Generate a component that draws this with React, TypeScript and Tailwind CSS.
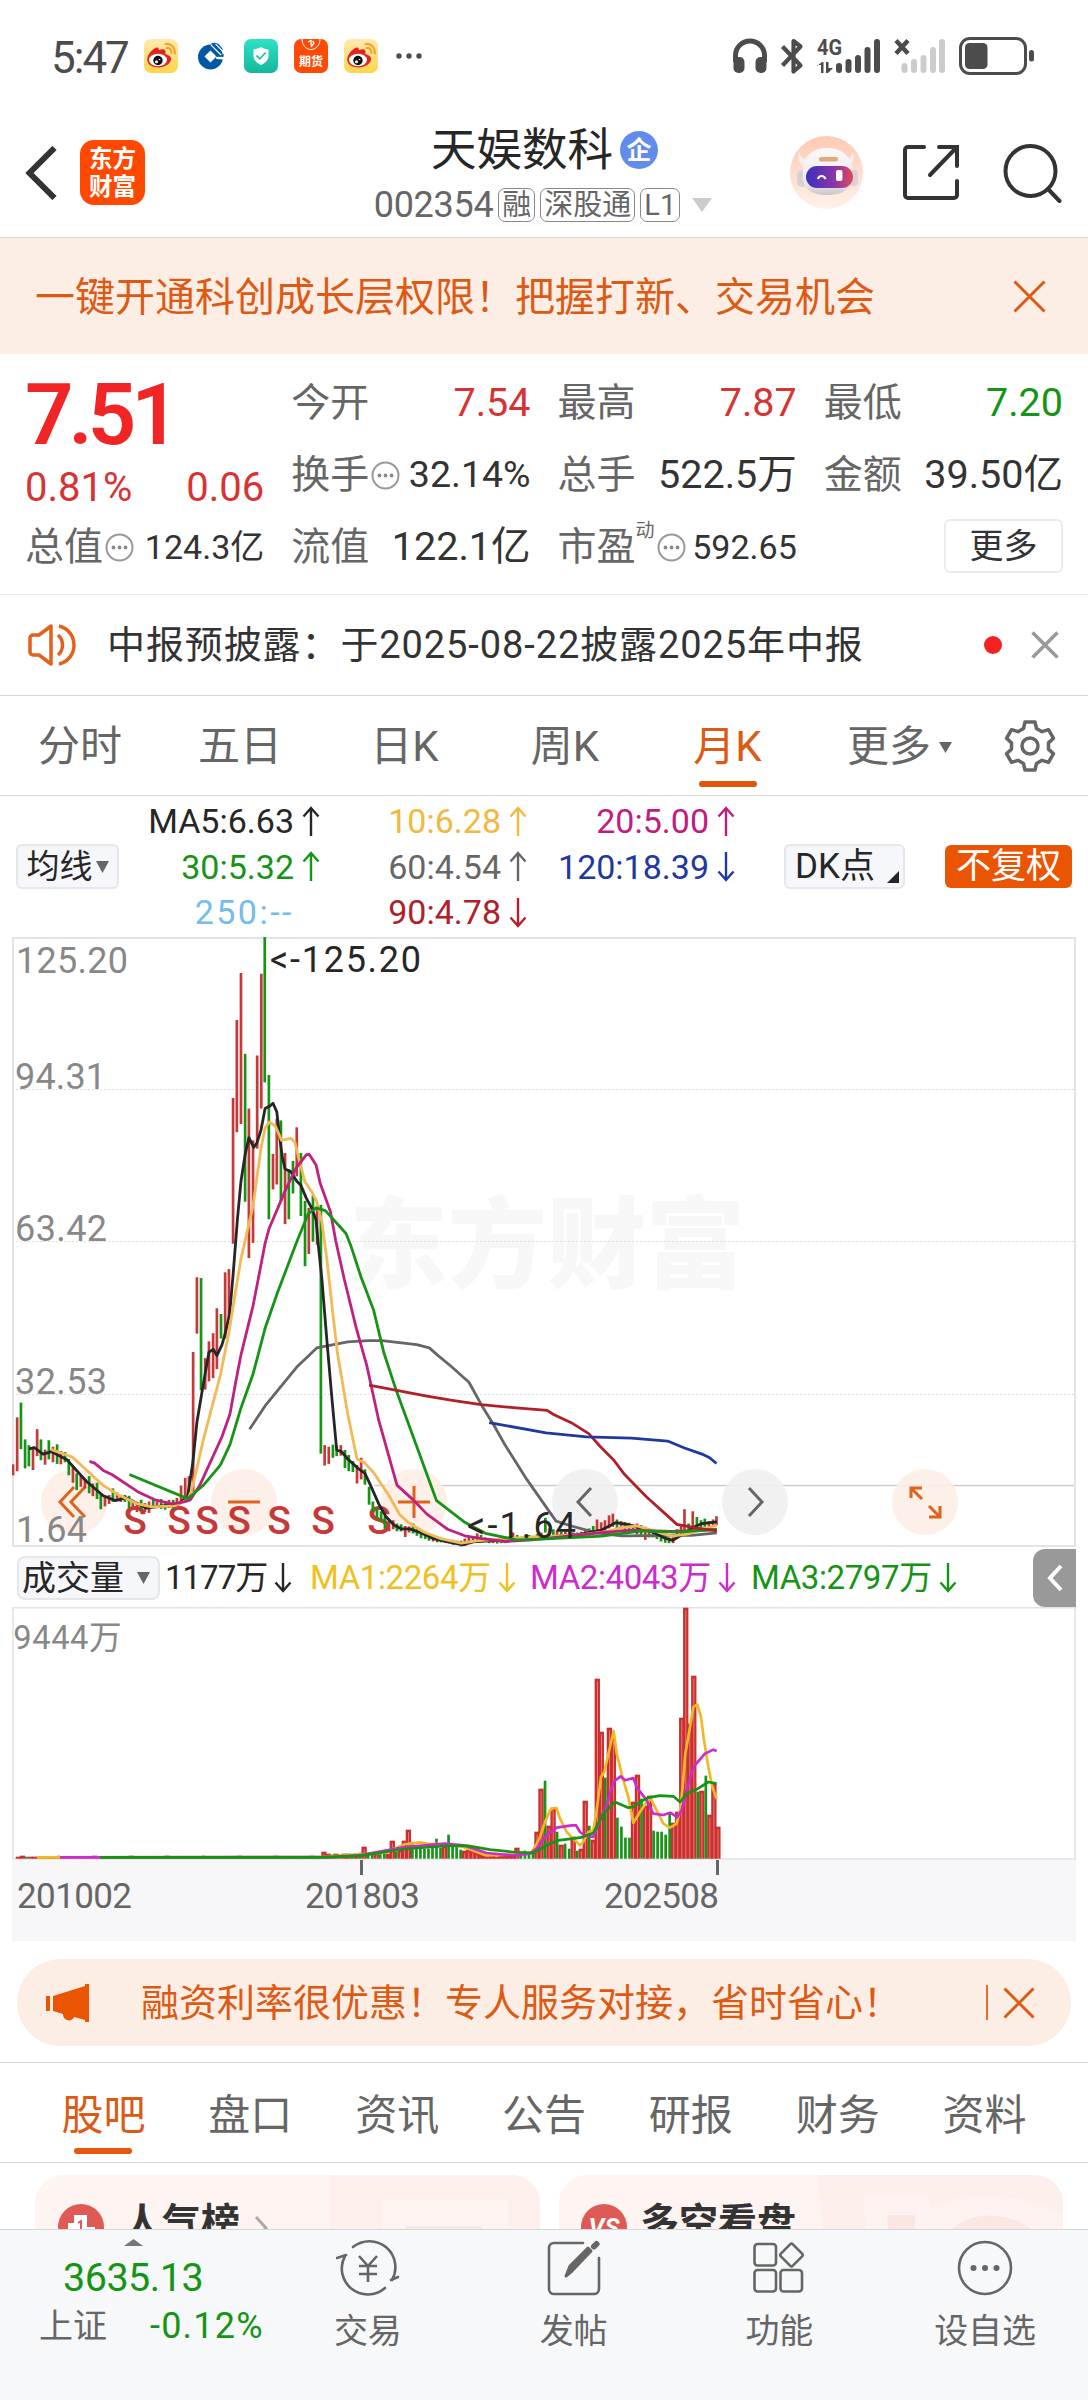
import { ReactNode } from 'react'
import clsx from 'clsx'

type Point = [number, number]
type Candle = [number, number, number, 'r' | 'g']

const RED = '#c53a38'
const GREEN = '#159415'

const toPoints = (list: Point[]) => list.map((p) => p.join(',')).join(' ')

// ---------- small icons ----------

function Arrow({ down }: { down?: boolean }) {
  return (
    <svg width="18" height="31" viewBox="0 0 18 31" fill="none" stroke="currentColor" strokeWidth="2.4" className="shrink-0">
      {down ? <path d="M9 1v28M1.5 20.5 9 29l7.5-8.5" /> : <path d="M9 30V2M1.5 10.5 9 2l7.5 8.5" />}
    </svg>
  )
}

function Cross({ size, width = 3 }: { size: number; width?: number }) {
  return (
    <svg width={size} height={size} viewBox={`0 0 ${size} ${size}`} stroke="currentColor" strokeWidth={width} className="shrink-0">
      <path d={`M1.5 1.5 ${size - 1.5} ${size - 1.5}M${size - 1.5} 1.5 1.5 ${size - 1.5}`} />
    </svg>
  )
}

function Triangle({ w, h, className }: { w: number; h: number; className?: string }) {
  return (
    <svg width={w} height={h} viewBox="0 0 10 10" preserveAspectRatio="none" className={clsx('shrink-0', className)}>
      <path d="M0 0h10L5 10z" fill="currentColor" />
    </svg>
  )
}

function InfoDots() {
  return (
    <svg width="29" height="29" viewBox="0 0 29 29" className="ml-[2px] shrink-0">
      <circle cx="14.5" cy="14.5" r="13" fill="none" stroke="#999" strokeWidth="2" />
      <g fill="#888">
        <circle cx="8.5" cy="14.5" r="1.9" />
        <circle cx="14.5" cy="14.5" r="1.9" />
        <circle cx="20.5" cy="14.5" r="1.9" />
      </g>
    </svg>
  )
}

// ---------- status bar ----------

function WeiboIcon() {
  return (
    <svg width="34" height="34" viewBox="0 0 34 34">
      <defs>
        <linearGradient id="wb" x1="0" y1="0" x2="0" y2="1">
          <stop offset="0" stopColor="#fdeab0" />
          <stop offset="1" stopColor="#ffd54a" />
        </linearGradient>
      </defs>
      <rect width="34" height="34" rx="7" fill="url(#wb)" />
      <path d="M3.2 20.5c0-5 6-11.5 9.300-12 2.200-.3 2.600 1.300 2.300 2.700 2.500-1.200 6.200-1.500 6.700 1 .2 1-.1 1.900-.4 2.800 3.100.8 6 2.200 6 5 0 4-5.500 8.500-12.700 8.500-6.200 0-11.200-3-11.200-8z" fill="#e2231f" />
      <ellipse cx="14" cy="21" rx="9" ry="6.2" fill="#fff" />
      <circle cx="14" cy="21.5" r="4.7" fill="#111" />
      <circle cx="12.5" cy="22.8" r="1.5" fill="#fff" />
      <circle cx="15.5" cy="20.5" r=".8" fill="#fff" />
      <path d="M21.5 5c5-1 9.800 3 9.300 9.500M22.500 9c2.900-.4 5 1.500 4.900 4.800" fill="none" stroke="#f0a330" strokeWidth="2.2" strokeLinecap="round" />
    </svg>
  )
}

function StatusBar() {
  return (
    <div className="flex h-[112px] items-center pl-[51px] text-[#4c4c4c]">
      <span className="w-[93px] pt-[3px] text-[44px] leading-none tracking-[-2px]">5:47</span>
      <WeiboIcon />
      <svg width="26" height="28" viewBox="0 0 26 28" className="ml-[20px]">
        <circle cx="12.5" cy="15" r="12.5" fill="#0258a6" />
        <path d="M13 1.500c4-1.500 7-.5 9 2l3 4-3 3z" fill="#0258a6" />
        <path d="M12.500 7.500 18.500 13.500H26V17h-7.500l-6 6.500-6-8z" fill="none" />
        <path d="m12.500 8.500 6 6-6 6-6-6z" fill="#fff" />
        <path d="M17 12.500l1.500 4.500L26 17.500V15l-8-1zM25.500 14.800H18v1.400h7.500z" fill="#fff" />
        <path d="m13 3 11 11M17.500 1.800 25.500 10" stroke="#fff" strokeWidth="1.100" />
        <path d="M25.600 11.500v3.300h-7.400l-1.400-1.400h6z" fill="#0258a6" />
      </svg>
      <svg width="34" height="34" viewBox="0 0 34 34" className="ml-[20px]">
        <defs>
          <linearGradient id="sec" x1="0" y1="0" x2="0" y2="1">
            <stop offset="0" stopColor="#2ee2c6" />
            <stop offset="1" stopColor="#16b69c" />
          </linearGradient>
        </defs>
        <rect width="34" height="34" rx="7" fill="url(#sec)" />
        <path d="M17 8c2.500 1.500 5 2.200 7.500 2.400v6.600c0 4-3 6.800-7.500 9-4.500-2.200-7.500-5-7.500-9v-6.600C12 10.200 14.500 9.500 17 8z" fill="#fff" />
        <path d="m12.500 16.500 3.300 3.300 6-6.300" fill="none" stroke="#20c5aa" strokeWidth="1.8" />
      </svg>
      <div className="relative ml-[16px] flex h-[34px] w-[34px] items-end justify-center overflow-hidden rounded-[7px] bg-[#ff4a05] pb-[5px] text-[12px] leading-none font-bold whitespace-nowrap text-white">
        <svg width="20" height="12" viewBox="0 0 20 12" className="absolute top-0 left-[7px]" fill="none" stroke="#fff">
          <path d="M1 0c0 6 4 10.500 9 10.500S19 6 19 0" />
          <path d="M7 3l3-1.500v5M10 8l3-4-1.500-2" strokeWidth="1.3" />
        </svg>
        期货
      </div>
      <div className="ml-[16px]">
        <WeiboIcon />
      </div>
      <svg width="26" height="6" viewBox="0 0 26 6" className="ml-[18px]" fill="currentColor">
        <circle cx="3" cy="3" r="2.7" />
        <circle cx="13" cy="3" r="2.7" />
        <circle cx="23" cy="3" r="2.7" />
      </svg>
      <svg width="304" height="40" viewBox="732 36 304 40" className="ml-[310px] shrink-0" fill="currentColor">
        {/* headphones */}
        <path d="M735.5 62v-6.500a14.500 14.500 0 0 1 29 0V62" fill="none" stroke="currentColor" strokeWidth="5" />
        <rect x="733.5" y="57" width="11" height="16" rx="5" />
        <rect x="755.5" y="57" width="11" height="16" rx="5" />
        {/* bluetooth */}
        <path d="m782.5 46.500 18 19-7 6V41l7 5.500-18 19" fill="none" stroke="currentColor" strokeWidth="4.200" strokeLinejoin="round" />
        <text x="817" y="55" fontSize="22" fontWeight="700" textLength="25" lengthAdjust="spacingAndGlyphs">4G</text>
        <path d="M817 66l5-4h1.500v11H821v-8h-4zM826 62h2.500v6h4.500l-5 5h-2z" />
        <g stroke="currentColor" strokeWidth="6" strokeLinecap="round">
          <path d="M839 66v4M848.500 62v8M858 58v12M867.500 50v20M877 42v28" />
          <path d="M904.500 66v4M914 62v8M923.500 58v12M933 50v20M942 42v28" stroke="#ccc" />
        </g>
        <path d="m896 40.500 12 13M908 40.500l-12 13" stroke="currentColor" strokeWidth="4.500" />
        <rect x="960.5" y="38.5" width="65" height="35" rx="9.5" fill="none" stroke="currentColor" strokeWidth="3" />
        <rect x="965" y="43" width="22.5" height="26" rx="4.5" />
        <rect x="1029" y="50" width="5" height="11.5" rx="2.5" />
      </svg>
    </div>
  )
}

// ---------- header ----------

function Tag({ children }: { children: ReactNode }) {
  return (
    <span className="flex h-[34px] shrink-0 items-center rounded-[7px] border border-[#888] px-[3px] text-[29px] leading-none whitespace-nowrap">
      {children}
    </span>
  )
}

function RobotAvatar() {
  return (
    <svg width="73" height="73" viewBox="0 0 73 73">
      <defs>
        <linearGradient id="rb" x1="0" y1="0" x2="0" y2="1">
          <stop offset="0" stopColor="#fdcab2" />
          <stop offset="1" stopColor="#fff1ea" />
        </linearGradient>
        <linearGradient id="shell" x1="0" y1="0" x2="0" y2="1">
          <stop offset="0" stopColor="#fbf8f8" />
          <stop offset=".75" stopColor="#eeeaec" />
          <stop offset="1" stopColor="#c9c4c8" />
        </linearGradient>
        <linearGradient id="visor" x1="0" y1="0" x2="1" y2="0">
          <stop offset="0" stopColor="#3a2fc0" />
          <stop offset=".6" stopColor="#8a35a8" />
          <stop offset="1" stopColor="#e2475c" />
        </linearGradient>
      </defs>
      <circle cx="36.5" cy="36.5" r="36.5" fill="url(#rb)" />
      <path d="M9 16c1 5 4 7 8 7l-3 7c-5-2-7-8-5-14zM63 16c-1 5-4 7-8 7l3 7c5-2 7-8 5-14z" fill="#f7efec" />
      <rect x="7" y="34" width="10" height="17" rx="5" fill="#d6d2d6" />
      <rect x="59" y="34" width="9" height="16" rx="4" fill="#d6d2d6" />
      <path d="M13 34c0-14 10-22 24-22s25 8 25 22c1 16-5 25-25 25S12 50 13 34z" fill="url(#shell)" />
      <rect x="29" y="21" width="19" height="4.5" rx="2" fill="#e0a880" />
      <rect x="16" y="30" width="47" height="22" rx="11" fill="url(#visor)" />
      <path d="M28 43c1-4 6-4 7.500 0" fill="none" stroke="#fff" strokeWidth="2.2" />
      <rect x="46" y="34" width="6.5" height="11" rx="2" fill="#fff" />
    </svg>
  )
}

function Header() {
  return (
    <div className="flex h-[126px] items-start border-b border-[#d8d8d8]">
      <div className="flex w-[373px] items-center pt-[28px] pl-[25px]">
        <svg width="32" height="54" viewBox="0 0 32 54" fill="none" stroke="#333" strokeWidth="6">
          <path d="M29.5 2 4.500 27l25 25" />
        </svg>
        <div className="ml-[23px] flex h-[65px] w-[65px] flex-col items-center justify-center rounded-[14px] bg-[#ff4800] text-[23.5px] leading-[28px] font-bold text-white">
          <span>东方</span>
          <span>财富</span>
        </div>
      </div>
      <div className="flex w-[340px] flex-col items-center pt-[14px]">
        <div className="flex h-[48px] items-center gap-[7px] pl-[3px] text-[#262626]">
          <span className="pt-[1px] text-[45.5px] leading-none">天娱数科</span>
          <span className="flex h-[38px] w-[38px] items-center justify-center rounded-full bg-[#628ceb] text-[25px] leading-none font-bold text-white">
            企
          </span>
        </div>
        <div className="mt-[13px] flex items-center gap-[5px] text-[#666]">
          <span className="text-[36px] leading-none tracking-[-0.3px]">002354</span>
          <Tag>融</Tag>
          <Tag>深股通</Tag>
          <Tag>L1</Tag>
          <Triangle w={20} h={14} className="ml-[7px] text-[#ccc]" />
        </div>
      </div>
      <div className="flex items-center pt-[24px] pl-[77px]">
        <RobotAvatar />
        <svg width="56" height="57" viewBox="0 0 56 57" fill="none" stroke="#333" strokeWidth="4" strokeLinecap="round" className="ml-[40px]">
          <path d="M21 3H5a3 3 0 0 0-3 3v45a3 3 0 0 0 3 3h46a3 3 0 0 0 3-3V37M36 3h18v19M53 4 27 31" />
        </svg>
        <svg width="60" height="60" viewBox="0 0 60 60" fill="none" stroke="#333" strokeWidth="4" strokeLinecap="round" className="ml-[43px]">
          <circle cx="28.5" cy="28" r="25" />
          <path d="m46 46 11.500 12" />
        </svg>
      </div>
    </div>
  )
}

// ---------- quote ----------

function Cell({ label, value, color = 'text-[#333]', size = 'text-[39.5px]', info, sup }: { label: string; value: string; color?: string; size?: string; info?: boolean; sup?: string }) {
  return (
    <div className="flex h-[72px] items-center justify-between">
      <span className="flex items-center text-[39px] leading-none whitespace-nowrap text-[#666]">
        {label}
        {sup && <sup className="relative -top-[17px] text-[19px] leading-none">{sup}</sup>}
        {info && <InfoDots />}
      </span>
      <span className={clsx('leading-none whitespace-nowrap', color, size)}>{value}</span>
    </div>
  )
}

function Quote() {
  return (
    <div className="grid h-[241px] grid-cols-4 gap-[27px] border-b border-[#eaeaea] px-[25px] pt-[13px]">
      <div>
        <div className="flex h-[97px] items-center text-[85px] leading-none font-semibold tracking-[-5px] text-[#f02626]">7.51</div>
        <div className="flex h-[47px] items-center justify-between text-[40px] leading-none text-[#d63434]">
          <span>0.81%</span>
          <span>0.06</span>
        </div>
        <Cell label="总值" value="124.3亿" info size="text-[34px]" />
      </div>
      <div>
        <Cell label="今开" value="7.54" color="text-[#d63434]" />
        <Cell label="换手" value="32.14%" info size="text-[37.5px]" />
        <Cell label="流值" value="122.1亿" />
      </div>
      <div>
        <Cell label="最高" value="7.87" color="text-[#d63434]" />
        <Cell label="总手" value="522.5万" />
        <Cell label="市盈" value="592.65" sup="动" info size="text-[34px]" />
      </div>
      <div>
        <Cell label="最低" value="7.20" color="text-[#159415]" />
        <Cell label="金额" value="39.50亿" />
        <div className="mt-[8px] ml-auto flex h-[54px] w-[119px] items-center justify-center rounded-[6px] border-2 border-[#ebebeb] text-[34px] leading-none text-[#333]">
          更多
        </div>
      </div>
    </div>
  )
}

function Notice() {
  return (
    <div className="flex h-[101px] items-center border-b border-[#d8d8d8] pl-[28px] text-[#333]">
      <svg width="50" height="44" viewBox="0 0 50 44" fill="none" stroke="#e0621b" strokeWidth="3.5" strokeLinejoin="round">
        <path d="M23 3v38L11 32H5a3 3 0 0 1-3-3V15a3 3 0 0 1 3-3h6z" />
        <path d="M30 12c6 5 6 15 0 20M31 3c20 5 20 33 0 38" />
      </svg>
      <span className="ml-[29px] text-[38px] leading-none tracking-[0.9px]">中报预披露：于2025-08-22披露2025年中报</span>
      <span className="ml-auto h-[18px] w-[18px] rounded-full bg-[#f62222]" />
      <span className="mr-[29px] ml-[29px] text-[#999]">
        <Cross size={28} width={3.5} />
      </span>
    </div>
  )
}

// ---------- period tabs ----------

const PERIODS = [
  { name: '分时', cls: 'w-[160px]' },
  { name: '五日', cls: 'w-[160px]' },
  { name: '日K', cls: 'w-[169px]' },
  { name: '周K', cls: 'w-[152px]' },
  { name: '月K', cls: 'w-[173px]', active: true },
]

function PeriodTabs() {
  return (
    <div className="flex h-[100px] items-center border-b border-[#d8d8d8] text-[42px] leading-none text-[#666]">
      {PERIODS.map((p) => (
        <div key={p.name} className={clsx('relative flex h-full items-center justify-center pt-[3px]', p.cls, p.active && 'text-[#dc5a14]')}>
          {p.name}
          {p.active && <span className="absolute bottom-[8px] h-[6px] w-[58px] rounded-full bg-[#e0560f]" />}
        </div>
      ))}
      <div className="ml-[33px] flex items-center gap-[8px] pt-[3px]">
        更多
        <Triangle w={13} h={11} />
      </div>
      <svg width="52" height="52" viewBox="0 0 52 52" fill="none" stroke="#666" strokeWidth="3.5" strokeLinejoin="round" className="ml-[52px]">
        <path d="M21 2h10l1.500 6.500 5.500 3.200 6.500-2 5 8.600-5 4.600v6.200l5 4.600-5 8.600-6.500-2-5.500 3.200L31 50H21l-1.500-6.500-5.500-3.200-6.500 2-5-8.600 5-4.600v-6.200l-5-4.600 5-8.600 6.500 2 5.500-3.200z" />
        <circle cx="26" cy="26" r="8" />
      </svg>
    </div>
  )
}

// ---------- moving averages ----------

const AVERAGES = [
  { text: 'MA5:6.63', color: 'text-[#262626]', dir: 'up' },
  { text: '10:6.28', color: 'text-[#f2b842]', dir: 'up' },
  { text: '20:5.00', color: 'text-[#c01c80]', dir: 'up' },
  { text: '30:5.32', color: 'text-[#159415]', dir: 'up' },
  { text: '60:4.54', color: 'text-[#666]', dir: 'up' },
  { text: '120:18.39', color: 'text-[#2038a0]', dir: 'down' },
  { text: '250:--', color: 'text-[#72bdee] tracking-[2.5px]', dir: '' },
  { text: '90:4.78', color: 'text-[#b02028]', dir: 'down' },
]

function AveragePanel() {
  return (
    <div className="flex h-[141px] items-center pl-[16px] text-[#262626]">
      <div className="flex h-[45px] w-[103px] items-center justify-center gap-[3px] rounded-[6px] border-2 border-[#e6e7ea] bg-[#f6f7fa] text-[33px] leading-none">
        均线
        <Triangle w={13} h={12} className="text-[#666]" />
      </div>
      <div className="grid auto-rows-[45.5px] grid-cols-[201px_207px_208px] text-[34px] leading-none">
        {AVERAGES.map((a) => (
          <div key={a.text} className={clsx('flex items-center justify-end gap-[8px]', a.color)}>
            {a.text}
            {a.dir ? <Arrow down={a.dir === 'down'} /> : <span className="w-[18px]" />}
          </div>
        ))}
      </div>
      <div className="relative ml-[49px] flex h-[45px] w-[121px] items-center rounded-[6px] border-2 border-[#e6e7ea] bg-[#f6f7fa] pl-[9px] text-[35px] leading-none">
        DK点
        <svg width="12" height="12" className="absolute right-[4px] bottom-[4px]">
          <path d="M12 0v12H0z" fill="#262626" />
        </svg>
      </div>
      <div className="ml-[40px] flex h-[43px] w-[127px] items-center justify-center rounded-[6px] bg-[#ea5504] text-[35px] leading-none text-white">
        不复权
      </div>
    </div>
  )
}

// ---------- monthly candles ----------

// x, high, low, colour in plot units
const CANDLES: Candle[] = [
  [38, 1333, 1360, 'r'], [50, 1218, 1350, 'r'], [61, 1182, 1296, 'g'], [73, 1272, 1343, 'g'], [84, 1286, 1338, 'g'],
  [96, 1290, 1347, 'r'], [108, 1247, 1313, 'r'], [119, 1272, 1323, 'g'], [131, 1297, 1334, 'r'], [142, 1274, 1321, 'g'],
  [154, 1290, 1328, 'r'], [166, 1284, 1332, 'g'], [177, 1300, 1333, 'r'], [189, 1303, 1328, 'g'], [200, 1320, 1360, 'g'],
  [212, 1338, 1378, 'r'], [223, 1355, 1396, 'g'], [235, 1362, 1388, 'r'], [247, 1370, 1392, 'r'], [259, 1362, 1404, 'g'],
  [270, 1380, 1411, 'r'], [282, 1378, 1418, 'g'], [293, 1405, 1443, 'g'], [305, 1410, 1436, 'r'], [317, 1408, 1430, 'r'],
  [328, 1392, 1425, 'g'], [340, 1402, 1420, 'r'], [351, 1408, 1425, 'r'], [363, 1408, 1425, 'g'], [375, 1410, 1440, 'g'],
  [386, 1420, 1445, 'r'], [398, 1425, 1450, 'r'], [410, 1420, 1444, 'g'], [421, 1428, 1450, 'r'], [433, 1424, 1452, 'r'],
  [445, 1420, 1440, 'g'], [456, 1424, 1440, 'r'], [468, 1418, 1442, 'g'], [480, 1424, 1444, 'g'], [491, 1420, 1440, 'r'],
  [503, 1420, 1444, 'g'], [514, 1415, 1435, 'r'],
  [526, 1385, 1425, 'r'], [538, 1366, 1415, 'r'], [549, 1362, 1415, 'r'], [561, 1058, 1400, 'r'], [572, 875, 1013, 'r'],
  [584, 877, 1152, 'g'], [596, 1073, 1150, 'r'], [607, 1032, 1130, 'r'], [619, 1012, 1122, 'r'], [630, 951, 1100, 'r'],
  [642, 965, 1025, 'g'], [654, 863, 1025, 'r'], [665, 855, 975, 'r'], [677, 436, 793, 'r'], [688, 245, 520, 'r'],
  [700, 130, 500, 'r'], [712, 328, 690, 'g'], [723, 462, 828, 'r'], [735, 540, 791, 'r'], [747, 332, 560, 'r'],
  [759, 132, 462, 'r'], [769, 42, 398, 'g'], [781, 380, 733, 'g'], [793, 573, 660, 'r'], [804, 487, 648, 'r'],
  [816, 491, 690, 'g'], [828, 571, 745, 'r'], [839, 610, 733, 'g'], [851, 590, 670, 'g'], [862, 508, 628, 'r'],
  [874, 571, 725, 'g'], [886, 688, 848, 'g'], [897, 705, 818, 'r'], [909, 675, 788, 'g'], [921, 700, 795, 'r'],
  [932, 698, 1307, 'g'], [943, 1286, 1336, 'r'], [955, 1290, 1332, 'r'], [967, 1285, 1317, 'g'], [978, 1288, 1313, 'g'],
  [990, 1286, 1312, 'r'], [1002, 1298, 1342, 'g'], [1013, 1310, 1350, 'g'], [1025, 1325, 1352, 'g'], [1037, 1335, 1380, 'r'],
  [1049, 1317, 1370, 'r'], [1060, 1345, 1383, 'g'], [1072, 1388, 1432, 'g'], [1083, 1424, 1450, 'g'], [1095, 1440, 1466, 'g'],
  [1107, 1448, 1474, 'g'], [1118, 1460, 1490, 'g'], [1130, 1470, 1497, 'r'], [1142, 1470, 1492, 'r'], [1153, 1478, 1497, 'g'],
  [1165, 1480, 1497, 'g'], [1177, 1484, 1511, 'r'], [1188, 1485, 1500, 'r'], [1200, 1478, 1502, 'g'], [1211, 1490, 1508, 'g'],
  [1223, 1498, 1514, 'g'], [1235, 1500, 1516, 'g'], [1246, 1505, 1520, 'g'], [1258, 1510, 1522, 'r'], [1270, 1512, 1524, 'g'],
  [1281, 1514, 1524, 'g'], [1293, 1516, 1525, 'r'], [1304, 1518, 1526, 'g'], [1316, 1518, 1530, 'g'], [1328, 1520, 1530, 'r'],
  [1339, 1520, 1534, 'g'], [1350, 1515, 1533, 'r'], [1362, 1508, 1524, 'r'], [1374, 1510, 1522, 'g'], [1386, 1502, 1520, 'r'],
  [1397, 1506, 1520, 'g'], [1409, 1512, 1522, 'r'], [1421, 1514, 1526, 'g'], [1432, 1516, 1526, 'r'], [1444, 1516, 1527, 'g'],
  [1456, 1512, 1526, 'g'], [1467, 1514, 1526, 'r'], [1479, 1510, 1522, 'r'], [1490, 1500, 1522, 'r'], [1502, 1506, 1520, 'g'],
  [1514, 1510, 1522, 'g'], [1525, 1508, 1520, 'r'], [1537, 1506, 1520, 'g'], [1549, 1508, 1520, 'r'], [1560, 1504, 1518, 'g'],
  [1572, 1500, 1516, 'r'], [1584, 1464, 1500, 'g'], [1595, 1490, 1510, 'r'], [1607, 1492, 1512, 'g'], [1618, 1494, 1510, 'r'],
  [1630, 1498, 1512, 'g'], [1642, 1496, 1510, 'r'], [1653, 1500, 1514, 'g'], [1665, 1500, 1512, 'r'], [1677, 1500, 1512, 'g'],
  [1688, 1498, 1512, 'r'], [1700, 1496, 1512, 'r'], [1711, 1490, 1508, 'g'], [1723, 1484, 1505, 'g'], [1734, 1468, 1503, 'r'],
  [1746, 1475, 1500, 'r'], [1757, 1470, 1496, 'r'], [1769, 1458, 1490, 'r'], [1780, 1454, 1486, 'r'], [1792, 1468, 1490, 'g'],
  [1804, 1472, 1492, 'r'], [1815, 1474, 1494, 'g'], [1827, 1476, 1500, 'r'], [1839, 1480, 1500, 'g'], [1850, 1478, 1505, 'r'],
  [1862, 1482, 1506, 'g'], [1874, 1486, 1518, 'r'], [1885, 1496, 1512, 'r'], [1897, 1500, 1512, 'g'], [1908, 1502, 1516, 'g'],
  [1920, 1508, 1522, 'g'], [1932, 1510, 1525, 'g'], [1943, 1512, 1526, 'g'], [1955, 1508, 1526, 'r'], [1966, 1492, 1514, 'r'],
  [1978, 1484, 1506, 'r'], [1988, 1443, 1496, 'r'], [2000, 1478, 1498, 'g'], [2012, 1448, 1490, 'r'], [2024, 1462, 1486, 'g'],
  [2036, 1470, 1488, 'g'], [2047, 1466, 1486, 'g'], [2059, 1472, 1488, 'r'], [2071, 1468, 1484, 'r'], [2081, 1460, 1482, 'r'],
]

const MA_LINES: { color: string; points: Point[] }[] = [
  {
    color: '#666666',
    points: [[725, 1247], [770, 1190], [862, 1095], [920, 1048], [1010, 1033], [1070, 1030], [1110, 1030], [1210, 1040], [1247, 1048], [1270, 1065], [1310, 1093], [1362, 1132], [1400, 1190], [1435, 1238], [1467, 1286], [1530, 1370], [1615, 1472], [1660, 1484], [1732, 1501], [1805, 1508], [2009, 1507], [2082, 1501]],
  },
  {
    color: '#262626',
    points: [[85, 1295], [100, 1292], [125, 1308], [150, 1302], [195, 1322], [250, 1374], [300, 1410], [335, 1422], [365, 1415], [425, 1440], [520, 1430], [545, 1412], [560, 1330], [572, 1230], [590, 1140], [607, 1058], [620, 1052], [630, 1067], [645, 1040], [655, 1010], [667, 965], [677, 870], [690, 730], [700, 640], [712, 575], [723, 533], [737, 557], [747, 545], [758, 515], [770, 462], [785, 455], [793, 449], [804, 470], [812, 530], [820, 580], [828, 610], [845, 617], [862, 640], [874, 650], [890, 682], [905, 705], [918, 735], [925, 800], [935, 880], [950, 1035], [965, 1180], [978, 1298], [992, 1302], [1010, 1320], [1040, 1343], [1060, 1355], [1075, 1382], [1100, 1430], [1120, 1460], [1145, 1482], [1165, 1491], [1190, 1491], [1220, 1500], [1260, 1515], [1300, 1523], [1345, 1530], [1375, 1523], [1528, 1515], [1688, 1504], [1747, 1494], [1788, 1476], [1820, 1480], [1849, 1486], [1893, 1498], [1929, 1513], [1954, 1519], [1988, 1502], [2017, 1486], [2039, 1478], [2082, 1474]],
  },
  {
    color: '#f2b957',
    points: [[150, 1297], [210, 1315], [300, 1385], [345, 1408], [400, 1430], [440, 1437], [505, 1435], [545, 1420], [555, 1400], [570, 1350], [590, 1275], [640, 1115], [665, 1010], [685, 905], [700, 830], [735, 700], [758, 560], [770, 510], [782, 495], [800, 505], [818, 540], [845, 535], [857, 545], [868, 585], [886, 642], [905, 665], [920, 690], [935, 740], [950, 835], [965, 950], [980, 1060], [1010, 1210], [1037, 1320], [1060, 1330], [1085, 1353], [1130, 1410], [1160, 1455], [1185, 1475], [1230, 1498], [1280, 1515], [1340, 1526], [1390, 1520], [1530, 1512], [1690, 1505], [1761, 1498], [1805, 1488], [1849, 1484], [1893, 1494], [1951, 1509], [1995, 1504], [2039, 1493], [2082, 1482]],
  },
  {
    color: '#c02080',
    points: [[260, 1326], [275, 1330], [300, 1348], [325, 1358], [400, 1400], [450, 1420], [500, 1430], [535, 1425], [553, 1420], [580, 1385], [645, 1265], [668, 1210], [685, 1130], [700, 1065], [735, 945], [758, 845], [770, 792], [782, 755], [830, 660], [860, 608], [890, 575], [898, 574], [918, 600], [930, 645], [960, 715], [975, 785], [1000, 880], [1035, 1000], [1065, 1090], [1100, 1225], [1153, 1384], [1200, 1420], [1240, 1455], [1300, 1492], [1350, 1508], [1400, 1515], [1470, 1522], [1545, 1518], [1747, 1500], [1834, 1494], [1951, 1497], [2082, 1493]],
  },
  {
    color: '#159415',
    points: [[376, 1358], [545, 1417], [590, 1385], [640, 1335], [668, 1285], [700, 1195], [735, 1112], [770, 1000], [805, 915], [862, 788], [895, 720], [918, 705], [945, 712], [1005, 768], [1020, 800], [1048, 873], [1085, 955], [1115, 1060], [1150, 1150], [1268, 1422], [1350, 1475], [1410, 1502], [1500, 1518], [1557, 1517], [1747, 1509], [1864, 1496], [1966, 1499], [2082, 1492]],
  },
  {
    color: '#b02028',
    points: [[1072, 1139], [1240, 1166], [1309, 1176], [1397, 1187], [1499, 1195], [1589, 1201], [1608, 1211], [1659, 1231], [1710, 1258], [1744, 1290], [1783, 1323], [1812, 1356], [1878, 1413], [1966, 1480], [2024, 1489], [2082, 1496]],
  },
  {
    color: '#2038a0',
    points: [[1421, 1231], [1586, 1256], [1703, 1266], [1834, 1269], [1939, 1276], [1988, 1293], [2039, 1308], [2061, 1317], [2081, 1331]],
  },
]

const PRICE_LABELS = [
  { text: '125.20', x: 4, y: 36, len: 112 },
  { text: '94.31', x: 3, y: 152, len: 91 },
  { text: '63.42', x: 3, y: 304, len: 92 },
  { text: '32.53', x: 3, y: 457, len: 92 },
  { text: '1.64', x: 4, y: 605, len: 71 },
]

const SELL_MARKS = [123, 167, 195, 227, 267, 311, 367]

function RoundButton({ x, warm, children }: { x: number; warm?: boolean; children: ReactNode }) {
  return (
    <g transform={`translate(${x} 565)`} fill="none" strokeWidth="3">
      <circle r="33" fill={warm ? '#fdeee6' : '#efefef'} fillOpacity=".9" />
      <g stroke={warm ? '#e0621b' : '#666'}>{children}</g>
    </g>
  )
}

function CandleChart() {
  return (
    <svg width="1064" height="611" viewBox="0 0 1064 611" className="mx-[12px] block">
      <text x="337" y="343" fontSize="99" fontWeight="900" fill="#f7f7f7" textLength="396">东方财富</text>
      <g stroke="#ddd" strokeDasharray="2 2">
        <path d="M0 152.500H1064M0 304.500H1064M0 457.500H1064" />
      </g>
      <path d="M362 548.500H1064" stroke="#ccc" strokeWidth="1.5" />
      <rect x="1" y="1" width="1062" height="608" fill="none" stroke="#e4e4e4" strokeWidth="2" />
      <RoundButton x={62} warm>
        <path d="M0-15-14 0 0 15M11-15-3 0 11 15" />
      </RoundButton>
      <RoundButton x={232} warm>
        <path d="M-16 0h32" />
      </RoundButton>
      <RoundButton x={402} warm>
        <path d="M-16 0h32M0-16v32" />
      </RoundButton>
      <RoundButton x={573}>
        <path d="M6-14-7 0 6 14" />
      </RoundButton>
      <RoundButton x={743}>
        <path d="M-6-14 7 0-6 14" />
      </RoundButton>
      <RoundButton x={913} warm>
        <path d="M-14-4v-10h11M-13-13-3-3M15 4v11H4M14 14 4 4" />
      </RoundButton>
      <g fill="#888" fontSize="36">
        {PRICE_LABELS.map((l) => (
          <text key={l.text} x={l.x} y={l.y} textLength={l.len}>{l.text}</text>
        ))}
      </g>
      <g fill={RED} fontSize="39" fontWeight="500" textAnchor="middle">
        {SELL_MARKS.map((x) => (
          <text key={x} x={x} y="597">S</text>
        ))}
      </g>
      <svg x="0" y="0" width="1064" height="609" viewBox="35 42 3090 1491" preserveAspectRatio="none" overflow="visible">
        {CANDLES.map(([x, high, low, c]) => (
          <path key={x} d={`M${x} ${high}V${low}`} stroke={c === 'r' ? RED : GREEN} strokeWidth="2.7" vectorEffect="non-scaling-stroke" />
        ))}
        {MA_LINES.map((l) => (
          <polyline key={l.color} points={toPoints(l.points)} fill="none" stroke={l.color} strokeWidth="2.8" strokeLinejoin="round" vectorEffect="non-scaling-stroke" />
        ))}
      </svg>
      <g fill="#262626" fontSize="36">
        <text x="258" y="35" textLength="151">&lt;-125.20</text>
        <text x="455" y="601" textLength="109">&lt;-1.64</text>
      </g>
    </svg>
  )
}

// ---------- volume ----------

const VOLUME_TAIL = [
  7, 5, 4, 5, 4, 5, 5, 4, 5, 6, 12, 6, 5, 6, 8, 6, 5, 18, 7, 9, 18, 29, 16, 12, 11, 10, 10, 12, 20, 11, 13, 24, 14, 12, 9, 8, 9, 8, 6,
  5, 4, 4, 3, 2, 3, 3, 3, 4, 11, 5, 8, 7, 6, 27, 70, 78, 33, 51, 27, 14, 15, 10, 22, 8, 10, 58, 33, 19, 180, 127, 81, 131, 120, 41, 32,
  21, 21, 57, 84, 60, 53, 63, 28, 27, 27, 24, 45, 36, 47, 141, 251, 135, 183, 67, 68, 83, 44, 75, 32,
]
const VOLUME_TAIL_COLORS =
  'rrgrgrrgrgrggrggrrgrrrggggggggrggggrrrrrrrrrrrrrrgggg' + 'rrgrrgrggrgrrgrrrgrrggggg'.slice(0, 24) + 'rrgrrgggggrrrrrrgrgrrr'

const VOLUMES = [...Array.from({ length: 76 }, (_, i) => (i % 9 === 1 ? 3 : 2)), ...VOLUME_TAIL]

const VOLUME_LINES: { color: string; points: Point[] }[] = [
  {
    color: '#f2b824',
    points: [[-1390, 831], [-532, 830], [-417, 822], [-340, 816], [-286, 792], [-240, 786], [-220, 790], [-167, 792], [-116, 798], [-43, 825], [61, 822], [95, 815], [105, 800], [120, 770], [135, 725], [150, 690], [160, 683], [170, 683], [180, 715], [200, 755], [225, 780], [240, 795], [250, 785], [265, 755], [280, 750], [290, 690], [303, 590], [313, 575], [330, 500], [341, 452], [350, 520], [370, 600], [385, 650], [400, 728], [420, 695], [440, 665], [452, 655], [470, 690], [490, 730], [510, 742], [530, 730], [540, 690], [548, 620], [556, 520], [565, 470], [580, 380], [592, 373], [603, 410], [612, 480], [625, 560], [637, 620], [650, 655]],
  },
  {
    color: '#cc2ccc',
    points: [[-1320, 831], [-500, 830], [-417, 824], [-286, 800], [-165, 790], [-110, 795], [-40, 818], [40, 825], [90, 820], [110, 805], [140, 765], [170, 742], [215, 735], [228, 735], [240, 755], [255, 765], [280, 770], [300, 720], [320, 675], [340, 605], [362, 588], [375, 600], [400, 593], [410, 620], [440, 660], [460, 700], [490, 704], [510, 697], [532, 710], [545, 690], [560, 630], [580, 560], [615, 520], [640, 508], [650, 512]],
  },
  {
    color: '#159415',
    points: [[-1200, 831], [-540, 831], [-417, 826], [-286, 806], [-165, 797], [-100, 796], [-30, 808], [40, 815], [100, 818], [140, 795], [175, 780], [240, 772], [280, 758], [310, 700], [345, 665], [385, 682], [400, 680], [425, 662], [445, 652], [480, 646], [520, 648], [540, 665], [560, 640], [590, 627], [625, 605], [650, 610]],
  },
]

function VolumeHeader() {
  return (
    <div className="flex h-[59px] items-center pl-[17px] text-[33px] leading-none tracking-[-0.4px]">
      <div className="flex h-[44px] w-[143px] items-center gap-[13px] rounded-[8px] border-2 border-[#e6e7ea] bg-[#f6f7fa] pl-[3px] text-[34px] tracking-normal whitespace-nowrap text-[#262626]">
        成交量
        <Triangle w={13} h={12} className="text-[#666]" />
      </div>
      <div className="ml-[5px] flex w-[145px] items-center gap-[7px] tracking-[-1px] text-[#262626]">
        1177万
        <Arrow down />
      </div>
      <div className="flex w-[220px] items-center gap-[7px] text-[#f0c020]">
        MA1:2264万
        <Arrow down />
      </div>
      <div className="flex w-[221px] items-center gap-[7px] text-[#cc2ccc]">
        MA2:4043万
        <Arrow down />
      </div>
      <div className="flex items-center gap-[7px] text-[#159415]">
        MA3:2797万
        <Arrow down />
      </div>
      <div className="mr-[12px] ml-auto flex h-[58px] w-[43px] items-center justify-center rounded-l-[12px] bg-[#999]">
        <svg width="16" height="28" viewBox="0 0 16 28" fill="none" stroke="#fff" strokeWidth="4">
          <path d="M14 2 3 14l11 12" />
        </svg>
      </div>
    </div>
  )
}

function VolumeChart() {
  return (
    <div className="mx-[12px]">
      <svg width="1064" height="253" viewBox="-1464 80 3192 759" className="block">
        <rect x="-1461" y="82" width="3186" height="754" fill="none" stroke="#e4e4e4" strokeWidth="5" />
        <text x="-1460" y="206" fontSize="98" fill="#888" textLength="325">9444万</text>
        {VOLUMES.map((v, i) => {
          const up = i < 76 ? i % 4 !== 2 : VOLUME_TAIL_COLORS[i - 76] !== 'g'
          const center = 111 + (i - 129) * 12.06
          return (
            <g key={i}>
              <rect x={center - (up ? 8 : 4)} y={835 - v * 3} width={up ? 16 : 8} height={v * 3} fill={up ? '#cb302f' : '#159415'} />
              {up && v > 5 && <rect x={center - 1} y={843 - v * 3} width="2.5" height={v * 3 - 8} fill="#e98a88" />}
            </g>
          )
        })}
        {VOLUME_LINES.map((l) => (
          <polyline key={l.color} points={toPoints(l.points)} fill="none" stroke={l.color} strokeWidth="8" strokeLinejoin="round" />
        ))}
      </svg>
      <div className="relative h-[81px] bg-[#f7f7f9] text-[35px] leading-none text-[#666]">
        <span className="absolute top-0 left-[348px] h-[15px] w-[3px] bg-[#666]" />
        <span className="absolute top-0 left-[704px] h-[15px] w-[3px] bg-[#666]" />
        <div className="flex pt-[19px] tracking-[-0.6px]">
          <span className="w-[288px] pl-[5px]">201002</span>
          <span className="w-[299px] pl-[5px]">201803</span>
          <span className="pl-[5px]">202508</span>
        </div>
      </div>
    </div>
  )
}

// ---------- lower part ----------

function Promo() {
  return (
    <div className="h-[122px] border-b border-[#d8d8d8] px-[17px] pt-[18px]">
      <div className="flex h-[87px] items-center rounded-full bg-[#fceee5] pl-[28px] text-[#dc5a14]">
        <svg width="46" height="40" viewBox="0 0 46 40" fill="#ea5504">
          <path d="M1 13h4v15H1zM8 13 40 3V1h4v38h-4v-2l-11-3c-1 3-4 4-7 3s-4-3-4-6L8 28z" />
        </svg>
        <span className="ml-[50px] text-[38px] leading-none">融资利率很优惠！专人服务对接，省时省心！</span>
        <span className="ml-auto h-[35px] w-[2px] bg-[#e07030]" />
        <span className="mr-[36px] ml-[15px]">
          <Cross size={32} />
        </span>
      </div>
    </div>
  )
}

const SECTIONS = ['股吧', '盘口', '资讯', '公告', '研报', '财务', '资料']

function SectionTabs() {
  return (
    <div className="grid h-[100px] grid-cols-7 border-b border-[#d8d8d8] px-[30px] text-[42px] leading-none text-[#666]">
      {SECTIONS.map((s, i) => (
        <div key={s} className={clsx('relative flex items-center justify-center pt-[6px]', i === 0 && 'text-[#dc5a14]')}>
          {s}
          {i === 0 && <span className="absolute bottom-[8px] h-[6px] w-[58px] rounded-full bg-[#e8560c]" />}
        </div>
      ))}
    </div>
  )
}

function Cards() {
  return (
    <div className="flex h-[66px] gap-[19px] overflow-hidden pt-[12px] pl-[35px] text-[39px] leading-none font-bold text-[#333]">
      <div className="relative flex h-[120px] w-[505px] shrink-0 items-start overflow-hidden rounded-[28px] bg-[#fef4f1] pt-[29px] pl-[23px]">
        <span className="absolute top-0 right-0 h-[120px] w-[210px] bg-[#fdf0ed]" />
        <span className="absolute top-[24px] right-[32px] h-[96px] w-[126px] bg-[#fef4f1]" />
        <span className="absolute top-[51px] right-[58px] h-[30px] w-[77px] bg-[#fbe6e3]" />
        <svg width="46" height="46" viewBox="0 0 46 46">
          <circle cx="23" cy="23" r="23" fill="#e05a55" />
          <path d="M10 19h6v-8h13v12h8v20H10z" fill="#fff" />
          <path d="m20 19 3-2v11" fill="none" stroke="#e05a55" strokeWidth="2" />
        </svg>
        <span className="ml-[19px]">人气榜</span>
        <svg width="14" height="26" viewBox="0 0 14 26" fill="none" stroke="#aaa" strokeWidth="3" className="mt-[11px] ml-[14px]">
          <path d="m2 2 10 11L2 24" />
        </svg>
      </div>
      <div className="relative flex h-[120px] w-[504px] shrink-0 items-start overflow-hidden rounded-[28px] bg-[#fef4f1] pt-[29px] pl-[22px]">
        <svg width="246" height="120" viewBox="0 0 246 120" className="absolute top-0 right-0">
          <path d="M0 0h246v120H14z" fill="#fdefec" />
          <path d="M46 20h64l6 14c20-16 80-22 130 6v80H54z" fill="#fef3f0" />
          <path d="M70 40h28v80H76zM130 60c20-26 60-24 84-6v66h-84z" fill="#fce6e4" />
        </svg>
        <span className="flex h-[46px] w-[46px] items-center justify-center rounded-full bg-[#e05a55] text-[25px] text-white italic">VS</span>
        <span className="relative ml-[13px]">多空看盘</span>
      </div>
    </div>
  )
}

function NavItem({ label, children }: { label: string; children: ReactNode }) {
  return (
    <div className="flex flex-1 flex-col items-center pt-[8px] text-[34px] leading-none text-[#666]">
      <svg width="64" height="60" viewBox="-32 -30 64 60" fill="none" stroke="#666" strokeWidth="2.6" strokeLinecap="round" strokeLinejoin="round">
        {children}
      </svg>
      <span className="mt-[16px]">{label}</span>
    </div>
  )
}

function BottomBar() {
  return (
    <div className="flex h-[172px] border-t-[1.5px] border-[#d5d6da] bg-[#f7f8fa]">
      <div className="flex w-[265px] flex-col pt-[9px] leading-none">
        <Triangle w={19} h={7} className="ml-[124px] rotate-180 text-[#777]" />
        <span className="mt-[12px] pl-[63px] text-[39.5px] leading-none tracking-[-0.5px] text-[#159415]">3635.13</span>
        <div className="mt-[10px] flex items-center pl-[39px]">
          <span className="text-[34px] leading-none text-[#666]">上证</span>
          <span className="ml-[43px] text-[36px] leading-none tracking-[1.2px] text-[#159415]">-0.12%</span>
        </div>
      </div>
      <NavItem label="交易">
        <path d="M-15-21A26 26 0 0 1 24 12M17 20A26 26 0 0 1-23-12M-31-10l9-3M23 12l7-3" />
        <path d="M-9-12 0-2l9-10M0-2v16M-9-2H9M-9 6H9" strokeLinecap="butt" />
      </NavItem>
      <NavItem label="发帖">
        <path d="M9-25h-29a5 5 0 0 0-5 5v41a5 5 0 0 0 5 5h40a5 5 0 0 0 5-5v-31" />
        <path d="M-8 8-4-2 14-20l3 3L-2 3z" fill="#666" strokeWidth="3" />
        <path d="M20-21.500 22.500-24" strokeWidth="6" />
      </NavItem>
      <NavItem label="功能">
        <rect x="-24.5" y="-24" width="21.5" height="21.5" rx="3" />
        <rect x="-24.5" y="2" width="21.5" height="21.5" rx="3" />
        <rect x="1.5" y="2" width="21.5" height="21.5" rx="3" />
        <rect x="-8.5" y="-8.5" width="17" height="17" rx="2" transform="translate(12.500 -13) rotate(45)" />
      </NavItem>
      <NavItem label="设自选">
        <circle r="26" />
        <g fill="#666" stroke="none">
          <circle cx="-11.5" r="3" />
          <circle r="3" />
          <circle cx="11.5" r="3" />
        </g>
      </NavItem>
    </div>
  )
}

export default function App() {
  return (
    <div className="h-[2400px] w-[1088px] overflow-hidden bg-white font-['Roboto','Noto_Sans_CJK_SC',sans-serif]">
      <StatusBar />
      <Header />
      <div className="flex h-[116px] items-center justify-between bg-[#fceee5] pr-[42px] pl-[35px] text-[#dc5a14]">
        <span className="pt-[3px] text-[40px] leading-none">一键开通科创成长层权限！把握打新、交易机会</span>
        <Cross size={33} />
      </div>
      <Quote />
      <Notice />
      <PeriodTabs />
      <AveragePanel />
      <CandleChart />
      <VolumeHeader />
      <VolumeChart />
      <Promo />
      <SectionTabs />
      <Cards />
      <BottomBar />
    </div>
  )
}
